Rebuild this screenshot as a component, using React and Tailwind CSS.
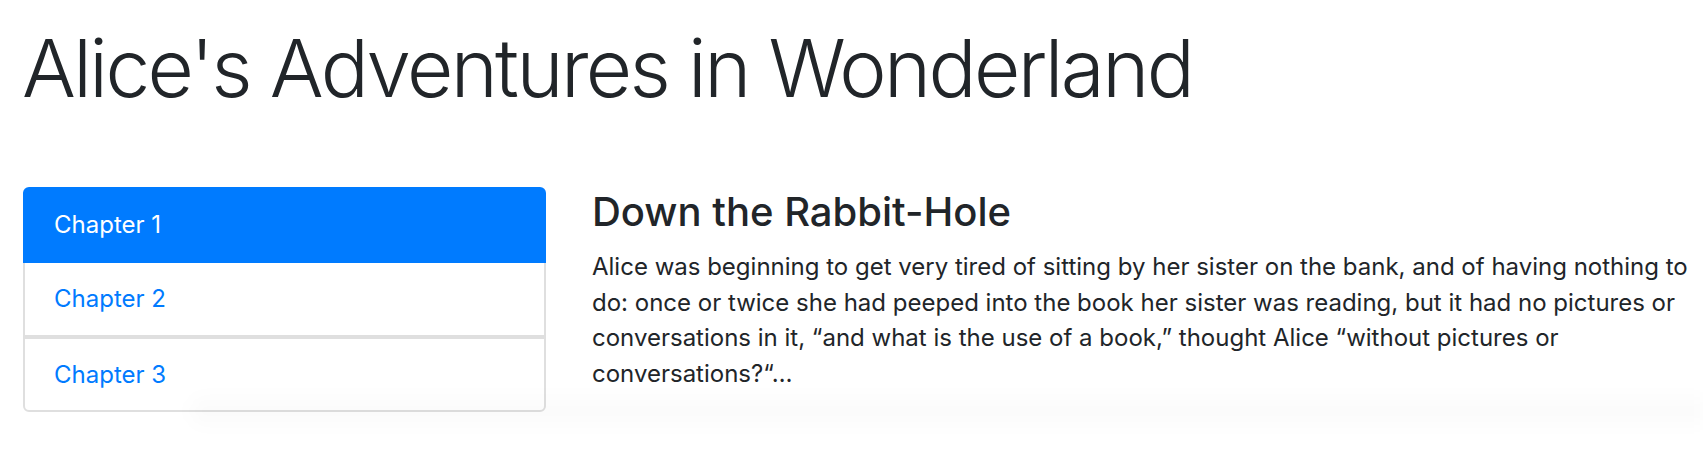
import React from 'react';

const chapters = ['Chapter 1', 'Chapter 2', 'Chapter 3'];

const ChapterList = () => (
  <div className="flex w-[523px] shrink-0 flex-col">
    <a className="flex h-[76px] items-center rounded-t-[6px] border-2 border-[#007bff] bg-[#007bff] pl-[29px] text-[24px] leading-none text-white">
      {chapters[0]}
    </a>
    <a className="flex h-[74px] items-center border-x-2 border-b-2 border-[#dfdfdf] pl-[29px] text-[24px] leading-none text-[#007bff]">
      {chapters[1]}
    </a>
    <a className="flex h-[75px] items-center rounded-b-[6px] border-2 border-[#dfdfdf] pl-[29px] text-[24px] leading-none text-[#007bff]">
      {chapters[2]}
    </a>
  </div>
);

export default function App() {
  return (
    <div className="relative h-[450px] overflow-hidden bg-white pt-[28px] font-['Inter',sans-serif] text-[#212529]">
      <h1 className="pl-[22px] text-[80px] font-light leading-none tracking-[-2.6px]">
        Alice's Adventures in Wonderland
      </h1>

      <div className="mt-[79px] flex gap-[46px] pl-[23px]">
        <ChapterList />

        <div className="w-[1105px] shrink-0 pt-[5px]">
          <h3 className="text-[40px] font-medium leading-none">Down the Rabbit-Hole</h3>
          <p className="mt-[17px] text-[24px] leading-[35.5px]">
            Alice was beginning to get very tired of sitting by her sister on the bank, and of
            having nothing to do: once or twice she had peeped into the book her sister was
            reading, but it had no pictures or conversations in it, “and what is the use of a
            book,” thought Alice “without pictures or conversations?“…
          </p>
        </div>
      </div>

      {/* faint shadow band along the bottom */}
      <div className="pointer-events-none absolute left-[190px] right-0 top-[397px] h-[28px] rounded-l-full bg-black/[0.015] blur-sm" />
    </div>
  );
}
